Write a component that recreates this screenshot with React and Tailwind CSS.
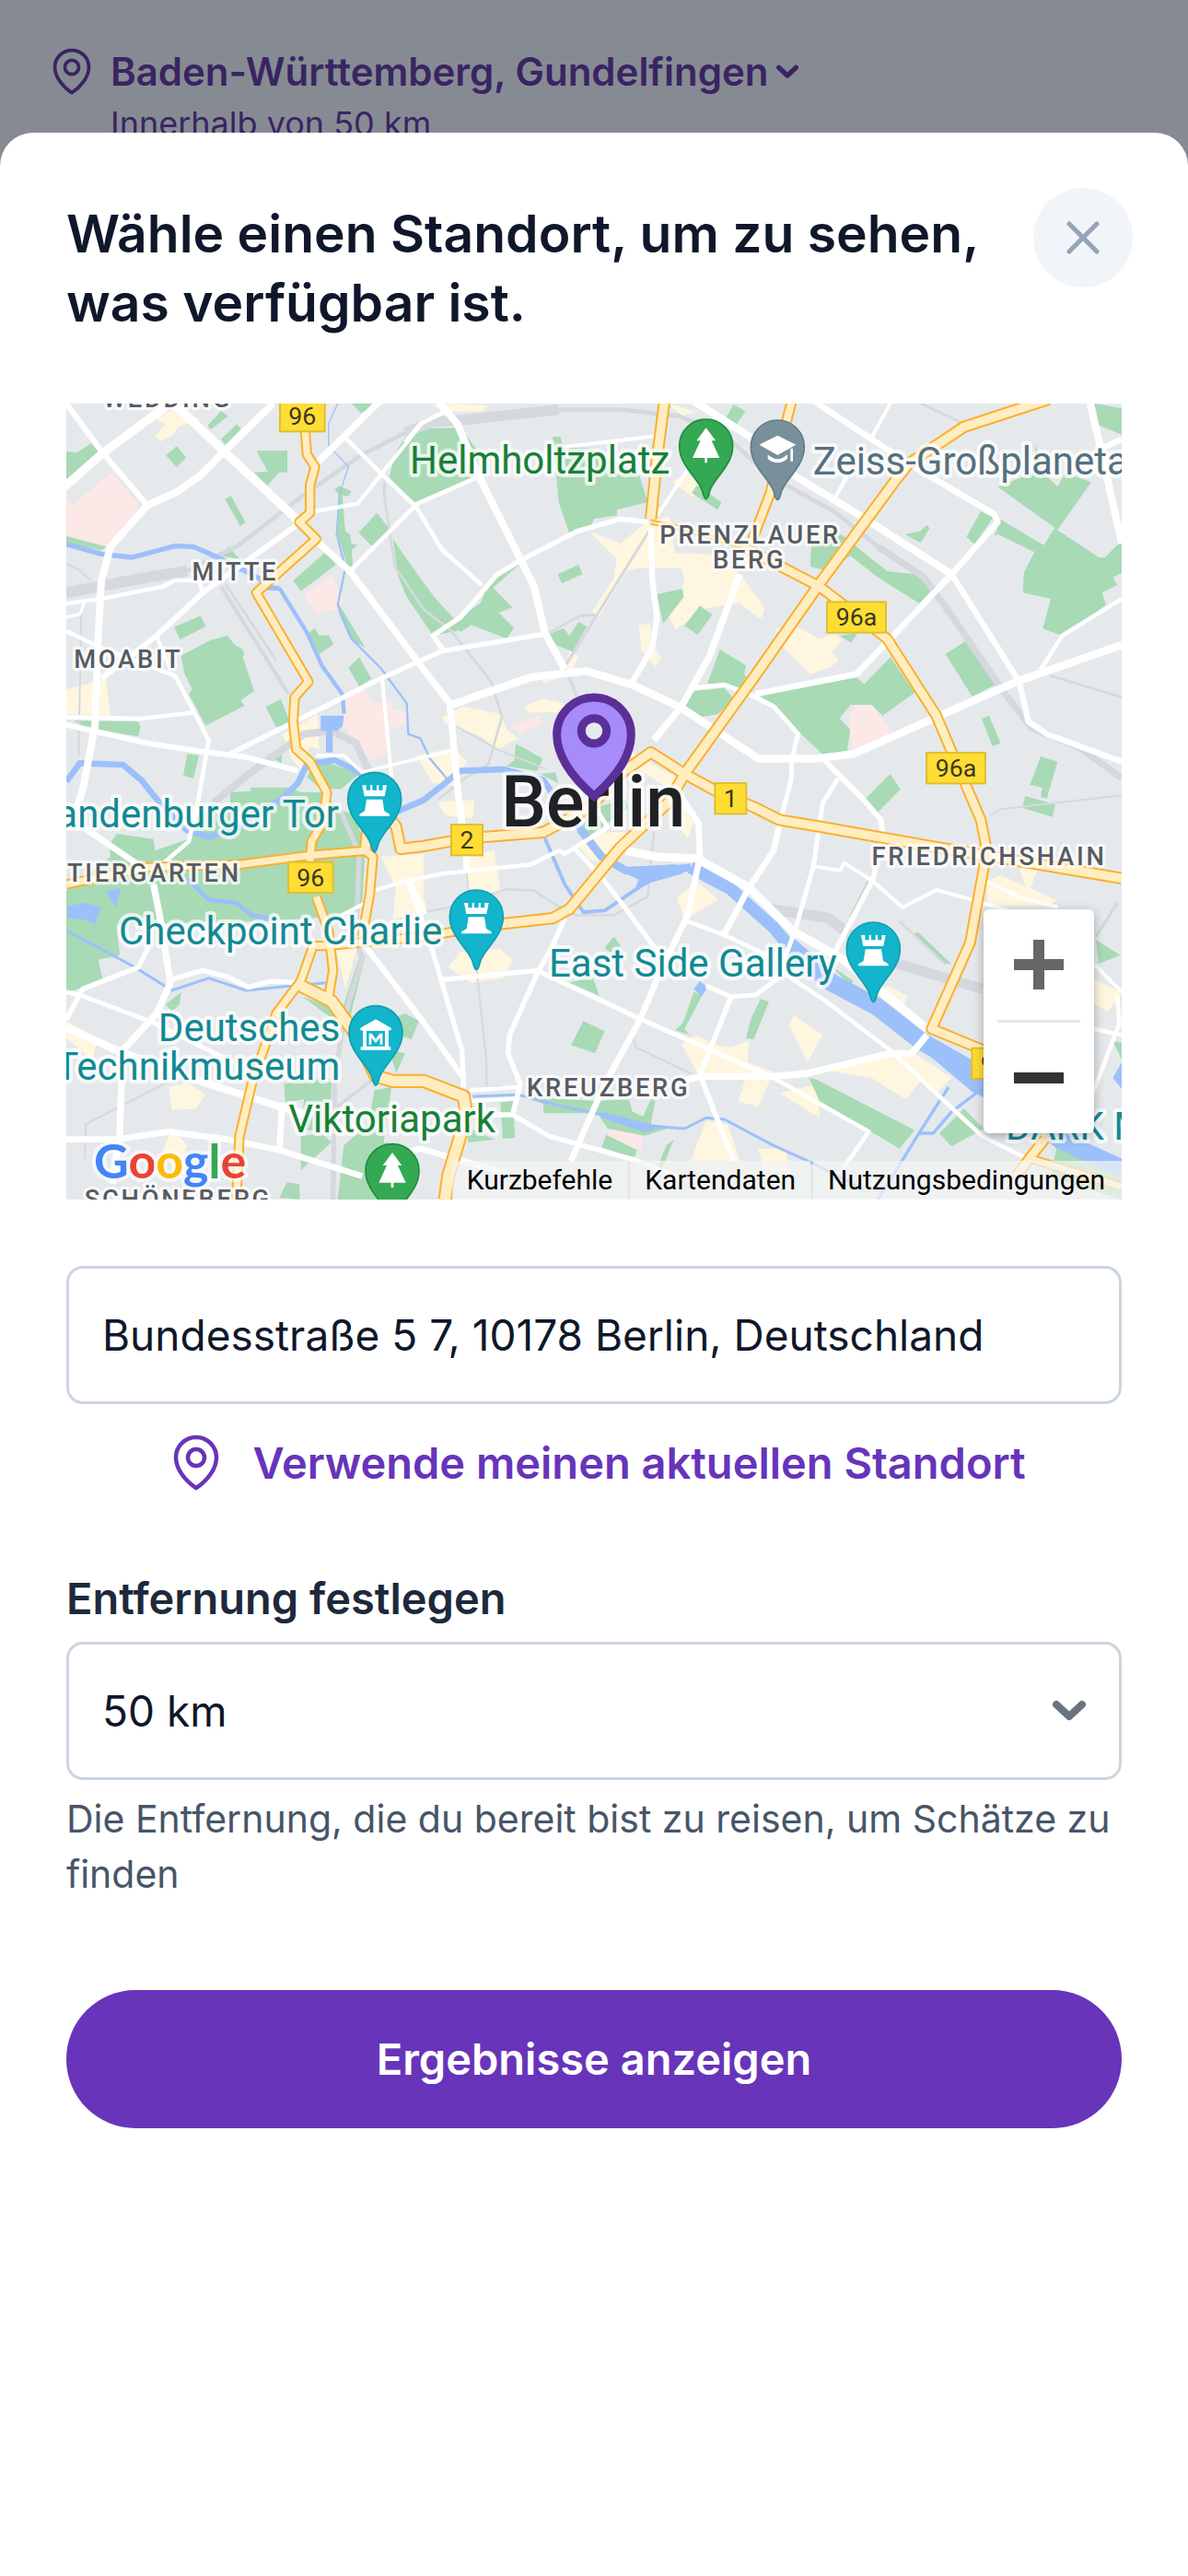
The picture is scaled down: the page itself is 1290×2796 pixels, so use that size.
import React, { useState } from "react";

const GREENS = [
  "0,156 35,160 80,130 115,165 0,246",
  "461,71 504,24 527,41 470,85",
  "504,116 554,68 570,81 519,136",
  "324,169 359,139 391,176 359,207",
  "619,154 720,154 720,224 694,224 654,268 612,224 656,221",
  "517,311 537,301 584,388 567,400",
  "929,0 1019,0 959,31",
  "1052,240 1074,156 1104,110 1180,81 1284,79 1334,146 1349,236 1144,326 1104,296",
  "889,268 929,286 919,301 899,301 909,416 924,426 929,456 949,461 929,476 934,526 919,546 894,456 879,426 889,296 874,281",
  "1012,356 1052,408 997,466 952,421",
  "739,576 844,484 879,524 764,611",
  "1064,441 1104,500 1199,631 1262,700 1274,740 1194,755 1108,628 1080,560",
  "499,496 529,466 564,506",
  "0,431 129,466 114,478 0,455",
  "351,728 437,691 454,726 371,768",
  "374,821 469,771 524,756 550,786 575,800 580,820 574,822 612,936 569,966 580,984 454,1049 399,946 410,930 384,876",
  "649,988 699,963 730,1041 684,1054",
  "784,751 809,731 824,756 854,754 871,784 824,816",
  "919,861 954,826 994,896 954,921",
  "884,646 974,796 924,766 889,686",
  "24,1033 234,1036 242,1054 234,1084 64,1056",
  "394,1141 432,1146 414,1221 381,1211",
  "654,1146 701,1134 702,1171",
  "784,1216 814,1156 954,1206 894,1256 824,1251",
  "0,1586 144,1476 139,1436 164,1401 284,1418 289,1456 404,1416 434,1326 534,1316 534,1266 600,1262 600,1250 724,1250 764,1266 834,1266 894,1326 939,1336 974,1446 964,1626 924,1666 664,1686 164,1696 174,1796 104,1811 119,1876 0,1921",
  "324,1956 374,1916 369,1956 344,1981",
  "954,1806 974,1796 924,2000 890,2000",
  "769,1931 864,1966 884,2016",
  "1079,1996 1104,1986 1149,2011 1124,2071 1094,2060",
  "1054,2106 1104,2116 1074,2181",
  "709,2216 794,2196 864,2211 859,2326 834,2366 764,2366 774,2266 714,2276",
  "1004,2236 1059,2226 1034,2406 1094,2416 1024,2592 884,2592 904,2416 984,2346",
  "764,2386 834,2376 864,2406 764,2496",
  "694,2586 719,2536 759,2541 761,2592",
  "1584,108 1609,108 1619,141 1704,146 1864,226 1894,321 1794,346 1794,364 1719,376 1704,406 1639,423 1604,321",
  "2174,3 2212,24 2179,76 2142,56",
  "2054,266 2134,321 2122,346 2037,291",
  "1601,556 1669,524 1681,556 1614,586",
  "1374,586 1479,521 1390,600 1454,664 1409,681 1459,731 1434,766 1319,721 1284,744 1254,716 1349,650",
  "1574,751 1619,731 1639,756 1669,711 1696,726 1649,808 1594,786",
  "1924,621 2007,603 2011,631 1944,716",
  "2064,658 2104,688 2057,753 2014,724",
  "2129,801 2214,853 2209,881 2219,896 2189,936 2089,911",
  "2044,936 2144,926 2174,961 2124,1011 2069,1021 2014,986",
  "1464,1108 1552,1156 1534,1196 1434,1181 1459,1161",
  "1544,1206 1594,1201 1602,1236",
  "3349,0 3438,16 3438,101 3364,71",
  "3034,271 3149,226 3159,131 3174,216 3229,271 3254,226 3339,256 3229,411",
  "3219,406 3364,501 3384,501 3438,446 3438,551 3409,566 3424,591 3374,616 3387,656 3244,756 3181,733 3207,636 3116,616 3119,551 3154,484 3034,425 3022,434 3044,378 3184,461",
  "2979,351 3019,371 2959,458 2932,434",
  "2731,426 2779,416 2804,396 2812,406 2784,454",
  "2424,501 2429,456 2524,426 2674,546 2764,556 2829,596 2779,651 2644,566 2554,496 2484,546 2424,531",
  "2520,756 2579,746 2556,779",
  "2254,948 2574,891 2599,914 2684,826 2764,941 2659,1016 2624,981 2554,981 2519,1026 2554,1061 2544,1131 2464,1143 2394,1076 2304,986",
  "2864,816 2934,771 3027,916 2951,954",
  "2982,1026 3006,1016 3044,1106 3017,1116",
  "3174,1149 3229,1166 3194,1286 3174,1281 3179,1251 3139,1241",
  "2684,1206 2717,1256 2640,1335 2600,1290",
  "3114,1316 3124,1278 3222,1306 3212,1346",
  "2609,1556 2622,1561 2566,1678 2551,1671",
  "2759,1726 2774,1721 2884,1826 2854,1821",
  "3354,1746 3434,1796 3364,1824",
  "2484,1826 2564,1880 2554,1894",
  "2419,2196 2444,2201 2764,2366 2714,2426 2454,2271",
  "2844,2376 2924,2296 2989,2361 2884,2419",
  "3229,2411 3438,2466 3438,2592 3204,2520",
  "2262,1938 2289,1948 2239,2071 2214,2066 2229,2006",
  "3409,2076 3438,2081 3438,2136",
  "1754,1771 1784,1736 1806,1766 1789,1806",
  "1639,1886 1714,1866 1736,1928",
  "1684,2011 1754,2044 1722,2116 1644,2089",
  "2044,1916 2072,1926 2014,2036 2029,2056 1984,2041 2009,2016",
  "1484,2256 1724,2271 1834,2266 1844,2306 1879,2321 1904,2266 1919,2271 1904,2346 1974,2356 1884,2384 1764,2361 1729,2311 1554,2311 1554,2281",
  "1759,2381 1859,2431 1849,2459 1744,2421",
  "1979,2396 1939,2496 1924,2491 1955,2415",
  "1414,2276 1454,2271 1462,2391 1422,2394",
  "1304,2356 1394,2396 1309,2406",
  "1319,2231 1414,2221 1444,2231",
  "1679,1376 1724,1316 1824,1286 1829,1321 1704,1406",
];

const PINKS = [
  "0,306 24,328 149,224 229,321 232,351 159,436 134,466 44,446 0,430",
  "774,626 864,556 904,636 889,666 819,689",
  "909,961 969,931 999,971 1059,976 1064,996 1109,1001 1109,1046 1039,1061 1044,1141 984,1164 899,1046",
  "1449,1051 1544,1014 1552,1041 1479,1074",
  "2554,1006 2574,979 2624,979 2694,1076 2564,1131 2549,1066",
  "1764,2376 1794,2356 1879,2381 1874,2431 1784,2411",
];

const CREAMS = [
  "289,106 324,66 274,46 364,16 434,51 365,75 350,100 309,124",
  "0,931 129,896 144,1016 0,1011",
  "734,1156 704,1076 819,1011 824,1126 794,1116 764,1191",
  "1189,6 1254,0 1374,6 1354,26 1254,26",
  "1959,0 2054,26 2009,41",
  "1974,256 2024,226 2064,266 2044,306",
  "1704,416 1804,456 1884,391 1964,366 1984,486 2104,491 2204,566 2274,666 2259,701 2194,651 2084,666 1984,736 1964,696 2014,576 2004,536 1864,536 1824,546 1734,696 1714,676 1784,566 1794,506",
  "1864,721 1904,716 1904,786 1939,826 1919,856 1874,806",
  "1489,986 1554,961 1619,976 1624,1006 1504,1006",
  "1224,1021 1294,986 1414,1011 1434,1061 1474,1091 1404,1126 1354,1086 1234,1041",
  "1139,1146 1264,1121 1304,1166 1264,1246 1194,1236",
  "1549,886 1624,866 1639,806 1669,826 1644,876 1554,911",
  "1824,1126 2004,1226 1964,1256 1844,1176",
  "2309,731 2394,731 2449,766 2504,751 2529,771 2494,806 2516,836 2494,856 2424,881 2334,791",
  "2244,636 2274,671 2264,701",
  "1024,1476 1164,1466 1164,1666 1064,1676 1074,1576",
  "879,1776 949,1766 909,1906",
  "0,2011 104,2066 84,2136 0,2066",
  "334,2226 394,2211 454,2251 424,2296 344,2301",
  "314,2436 344,2356 394,2416 364,2516",
  "1209,1296 1329,1291 1324,1351 1234,1341",
  "1289,1471 1394,1456 1414,1586 1314,1606",
  "1244,1836 1284,1786 1414,1776 1454,1811 1424,1871 1319,1886",
  "1104,1486 1174,1636 1154,1706 1104,1666",
  "1664,1436 1744,1396 1824,1396 1764,1496 1704,1486",
  "1989,1611 2054,1556 2124,1616 2074,1646 2014,1681",
  "1984,1366 2004,1296 2044,1366 2024,1416",
  "2004,2086 2054,2056 2104,2086 2164,2096 2224,2076 2219,2146 2304,2176 2254,2291 2189,2271 2214,2196 2064,2196",
  "2034,2466 2084,2336 2154,2346 2194,2466",
  "2354,2026 2369,1991 2464,2056 2414,2146",
  "2444,2166 2764,2116 2884,2196 2834,2246 2784,2206 2734,2266 2624,2196",
  "2324,2246 2444,2216 2454,2326",
  "2654,1936 2674,1894 2742,1931 2714,1981",
  "2994,1556 3044,1536 3224,1616 3204,1636 3004,1636",
  "3104,1516 3164,1516 3134,1596",
  "3349,1876 3438,1916 3394,1981 3349,1956",
  "2254,2426 2344,2426 2354,2500 2274,2500",
];

const PONDS = [
  "829,1016 904,1016 900,1050 884,1066 829,1066",
  "4,1636 64,1626 114,1641 94,1696 60,1680 4,1676",
  "129,1590 179,1576 160,1640",
  "2044,1906 2064,1881 2089,1901 2069,1931",
  "3409,2196 3438,2146 3438,2231",
  "2784,2060 2884,2110 2990,2160 2990,2260 2950,2240 2784,2100",
  "1744,1460 1824,1510 1984,1500 2010,1530 1904,1560 1850,1590 1864,1550 1780,1510",
  "1739,2306 1904,2346 1919,2366 1884,2372 1744,2326",
];

// [points, stroke width]
const RAILS = [
  ["0,616 264,566 394,545", 36],
  ["394,545 560,462 784,290 964,166 1104,95", 14],
  ["1104,95 1190,60 1304,52 1604,20", 34],
  ["1604,20 1804,20 1994,40 2144,100 2240,190 2344,266 2500,350 2644,466", 14],
  ["2644,466 2794,566 2884,690 3054,940 3144,1056 3300,1120 3438,1220", 22],
  ["504,596 724,946", 12],
  ["520,590 684,836", 8],
  ["49,666 40,1150", 6],
  ["0,520 40,540 80,576", 6],
  ["1036,256 1036,300 1070,530 1164,670 1254,740 1384,906 1419,1021 1374,1176 1304,1216 1210,1290", 8],
  ["1904,406 1724,696 1624,856 1664,956", 9],
  ["1564,751 1674,691 1724,688", 8],
  ["480,1300 590,1210 664,1156 774,1076 864,1066 944,1106 1004,1236", 24],
  ["894,1326 954,1466 944,1746 964,1806 904,2006 874,2200 869,2592", 16],
  ["870,2300 1000,2200", 10],
  ["1304,1526 1339,1866 1369,2146 1369,2226", 6],
  ["1164,1656 1274,1636 1434,1581 1524,1586 1624,1651 1664,1666 1784,1666 1894,1606 1914,1396", 7],
  ["1270,1050 1404,1126 1560,1190", 6],
  ["2294,1646 2484,1676 2574,1746 2714,1826 2984,1906", 34],
  ["2714,1686 2864,1826", 8],
  ["1849,2066 1854,2096 2044,2186", 6],
  ["60,2460 64,2346 330,2210", 6],
  ["3009,1341 3044,1321 3438,1276", 6],
  ["2784,0 2914,61", 8],
  ["3204,886 3438,956", 8],
  ["3354,1736 3424,1626", 10],
];

const WATERS = [
  ["0,458 114,490 214,501 354,464 414,466 494,501 584,546 630,570 650,600 694,601", 16],
  ["694,601 784,746 834,856 899,946 905,1010", 13],
  ["857,1066 857,1136", 22],
  ["884,436 909,536 884,656 929,766 1024,861 1109,976 1114,1076 1154,1091 1184,1156 1244,1226", 7],
  ["884,0 854,66 854,136 919,206 889,296 879,436", 4],
  ["0,1231 44,1171 184,1176 244,1226 304,1300 394,1390 464,1411 564,1380 600,1350 704,1286 754,1236 784,1176 874,1161 954,1201 1020,1280 1084,1326 1164,1291 1234,1236 1284,1196 1424,1191 1554,1226 1604,1300 1674,1386", 20],
  ["1674,1386 1744,1476 1824,1521 1984,1516 2034,1511", 26],
  ["2034,1511 2164,1581 2304,1706 2354,1766", 40],
  ["2354,1766 2494,1886 2644,1966 2784,2076 2984,2190 3240,2400 3438,2490", 58],
  ["1559,1416 1624,1566 1684,1656 1754,1651 1864,1576 1904,1531", 12],
  ["0,1716 94,1766 224,1836 344,1911 464,1871 584,1911 734,1896 844,1886", 9],
  ["1324,2256 1474,2251 1604,2286 1744,2316 1884,2351 2014,2361 2084,2326 2144,2331 2304,2416 2424,2470 2600,2560", 9],
  ["394,1546 464,1616 554,1626 604,1666 664,1676", 14],
  ["2874,2226 2784,2366 2644,2592", 10],
  ["2964,2246 2884,2306 2824,2376 2774,2376", 10],
];

const STREETS = [
  ["-10,275 119,161 309,21 345,-10", 28],
  ["340,-10 514,156 754,380", 28],
  ["814,446 924,546 1164,866 1249,976", 22],
  ["1249,976 1279,1296 1304,1466 1304,1526", 22],
  ["0,0 119,161 264,331", 18],
  ["674,0 514,156 434,236 364,286 264,331 144,466 114,576 104,756 96,976 94,1046 54,1256 34,1320", 24],
  ["44,1371 254,1516", 20],
  ["1024,-10 819,191", 22],
  ["1164,56 1094,146 949,326 809,351", 13],
  ["904,106 1024,226 1139,336 1224,476 1354,591", 14],
  ["1349,236 1144,326 1054,416 924,546", 14],
  ["764,386 444,616 294,756 114,896", 18],
  ["0,651 114,636 314,596 354,576 434,576 444,616", 14],
  ["0,696 44,686 59,651", 10],
  ["0,741 114,796 274,856 354,886 464,1096 429,1296 399,1426 294,1516", 14],
  ["294,756 340,870", 12],
  ["0,1021 244,1026 414,1006", 14],
  ["0,1046 264,1106 464,1136 584,1151 754,1196", 18],
  ["534,1141 724,1046 1024,896 1224,806 1554,751", 16],
  ["1029,896 1059,1216", 12],
  ["814,1146 904,1146 964,1201 1104,1166 1254,1131", 11],
  ["1214,-4 1274,66 1344,236 1479,506 1524,596 1559,746 1624,866", 24],
  ["1104,126 1154,66 1234,26", 14],
  ["1624,141 1924,106", 12],
  ["1230,806 1194,756 1284,696 1404,556 1479,511 1664,416 1804,376 1894,386", 16],
  ["1254,981 1514,891 1694,871 1844,916 2004,991 2254,1156 2444,1156 2564,1141 2824,1026 3094,906 3438,786", 25],
  ["1904,406 1909,576 1924,696 1909,796 1844,906", 19],
  ["2194,556 2094,826 2004,986 1914,1096", 22],
  ["2044,926 2144,916 2224,946 2304,986 2384,1076 2364,1156 2361,1226 2329,1346", 15],
  ["2244,946 2574,881 2694,756 2884,556 3034,386 3024,361 2744,196 2624,116 2424,-15", 20],
  ["2044,-8 2224,106 2374,236 2604,376 2884,556", 24],
  ["2684,0 2624,110", 12],
  ["2544,236 2504,306", 12],
  ["2024,216 1924,366", 12],
  ["2884,556 3104,906 3134,1036 3194,1076 3438,1166", 19],
  ["3174,866 3244,756 3438,636", 14],
  ["3334,-6 3374,166 3438,456", 24],
  ["3374,146 3438,116", 20],
  ["2464,1156 2594,1286 2654,1356 2659,1400 2629,1546 2504,1786", 17],
  ["2514,1221 2464,1300 2449,1400 2434,1506 2374,1716 2314,1876 2244,1926 2164,1931 2084,1896", 15],
  ["2434,1506 2519,1521 2534,1496 2629,1556 2724,1641 2834,1584 2950,1616 3064,1650", 12],
  ["3000,1556 3100,1606 3230,1640", 12],
  ["2329,1346 2304,1456 2224,1576 2144,1726", 20],
  ["1824,1456 1924,1476 2054,1481 2224,1576 2304,1656 2364,1716 2524,1806 2804,2036", 27],
  ["1994,1266 2059,1366 2064,1476 2024,1666 1924,1876 1869,2006 1754,2216 1644,2466", 20],
  ["1654,1446 1754,1556 1824,1646 1904,1756 1940,1790", 15],
  ["1104,1556 1224,1531 1514,1501 1604,1456 1624,1466 1764,1380 1720,1310", 14],
  ["1114,1556 1194,1786 1289,2106 1294,2226", 16],
  ["1224,1876 1534,1846 1874,2006 2304,2196", 16],
  ["1624,1676 1584,1766 1534,1856 1444,2056 1439,2116 1479,2216 1454,2316", 17],
  ["2024,1686 2144,1731 2304,1806 2354,1866 2474,1946 2684,2106 2844,2256 2984,2386 3144,2466", 14],
  ["2164,1936 2064,2186 2174,2466", 17],
  ["2004,2206 2064,2191 2304,2191 2414,2181 2684,2116 2754,2116 2804,2056", 22],
  ["2304,2196 2614,2371 2534,2486", 14],
  ["1314,2236 1474,2226", 14],
  ["1314,2272 1474,2262", 12],
  ["1394,2316 1454,2316 1574,2386 1844,2461 2000,2520", 16],
  ["974,1766 1164,2016 1294,2196", 19],
  ["284,1566 304,1666 339,1886 294,1986 184,2106 174,2376 150,2540", 22],
  ["270,1766 234,1836 54,1906 0,2006", 16],
  ["0,1916 44,1926 284,2016 544,2146", 15],
  ["0,2031 164,2106 464,2216 684,2286 800,2320", 24],
  ["339,1876 444,1846 524,1866 594,1901 664,1881 754,1886", 16],
  ["0,2396 164,2396 334,2371 524,2396 694,2431 964,2516", 20],
  ["704,2276 694,2431", 20],
  ["1004,1586 1120,1550 1170,1660", 12],
  ["974,1626 870,1680", 12],
  ["1100,2440 1154,2426 1440,2510", 20],
  ["3349,1826 3438,1916", 12],
  ["3349,2036 3438,2056", 14],
  ["3424,1930 3430,2020 3344,2246", 14],
];

const HIGHWAYS = [
  ["776,60 784,166 810,206 794,266 794,356 759,386 814,441 619,616 789,906 744,956 739,1036 749,1126 794,1166 849,1266 834,1366 799,1426 794,1500", 34],
  ["814,1606 854,1716 869,1846 854,1936", 34],
  ["0,1566 264,1510 564,1501 794,1471 974,1456 999,1476 989,1596 964,1736", 34],
  ["974,1456 980,1390 1060,1360 1074,1376 1089,1450 1164,1441 1304,1416 1554,1396 1704,1316 1804,1206 1904,1136 2014,1206 2124,1266 2244,1316 2324,1356 2444,1376 2844,1446 3438,1546", 40],
  ["2364,-10 2330,120 2294,290 2234,446", 36],
  ["1949,-10 1924,180 1904,376", 40],
  ["1904,386 2004,406 2204,466", 18],
  ["2204,466 2454,596 2674,766 2834,1016 2979,1356 2999,1456 2944,1756 2819,2036 2989,2106 3060,2140", 38],
  ["3200,-14 2924,76 2744,196 2704,246 2454,586 2244,886 2014,1206 1964,1296 1804,1446 1639,1646 1584,1676 1404,1696", 40],
  ["1404,1696 1164,1736 844,1766 804,1766 764,1880 684,1986 604,2216 564,2386 554,2592", 34],
  ["764,1896 864,1946 944,2056 1008,2190 1064,2206 1164,2206 1294,2256 1304,2316 1244,2516 1234,2592", 46],
  ["3194,2386 3144,2450 3094,2516", 38],
  ["3144,2460 3438,2550", 32],
];

const SHIELDS = [
  { x: 693, y: -12, w: 152, label: "96" },
  { x: 720, y: 1490, w: 152, label: "96" },
  { x: 1251, y: 1368, w: 108, label: "2" },
  { x: 2110, y: 1233, w: 108, label: "1" },
  { x: 2475, y: 643, w: 198, label: "96a" },
  { x: 2799, y: 1134, w: 198, label: "96a" },
  { x: 2947, y: 2096, w: 198, label: "96a" },
];

const DISTRICTS = [
  { x: 330, y: 12, label: "WEDDING" },
  { x: 550, y: 576, label: "MITTE" },
  { x: 202, y: 861, label: "MOABIT" },
  { x: 2228, y: 455, label: "PRENZLAUER" },
  { x: 2225, y: 537, label: "BERG" },
  { x: 286, y: 1558, label: "TIERGARTEN" },
  { x: 3006, y: 1504, label: "FRIEDRICHSHAIN" },
  { x: 1766, y: 2256, label: "KREUZBERG" },
  { x: 364, y: 2620, label: "SCHÖNEBERG" },
];

const TEAL = "#128a93";
const PLACES = [
  { x: 1966, y: 228, anchor: "end", fill: "#188038", label: "Helmholtzplatz" },
  { x: 2432, y: 232, anchor: "start", fill: "#56707f", label: "Zeiss-Großplanetarium" },
  { x: 888, y: 1379, anchor: "end", fill: TEAL, label: "Brandenburger Tor" },
  { x: 1225, y: 1762, anchor: "end", fill: TEAL, label: "Checkpoint Charlie" },
  { x: 2510, y: 1866, anchor: "end", fill: TEAL, label: "East Side Gallery" },
  { x: 892, y: 2076, anchor: "end", fill: TEAL, label: "Deutsches" },
  { x: 892, y: 2203, anchor: "end", fill: TEAL, label: "Technikmuseum" },
  { x: 1398, y: 2373, anchor: "end", fill: "#188038", label: "Viktoriapark" },
  { x: 3060, y: 2397, anchor: "start", fill: TEAL, label: "DARK MATTER" },
];

const GLYPHS = {
  tree: "M0-232 31-190H18L44-134H4V-118H-4V-134H-44L-18-190H-31Z",
  rook: "M-40-218H-27V-202H-14V-218H-7V-202H7V-218H14V-202H27V-218H40L33-182H-33ZM-26-172H26L32-134 49-124V-118H-49V-124L-32-134Z",
  school: "M0-210 60-180 0-146-60-180ZM-32-148Q0-118 32-148V-134Q0-108-32-134ZM42-168H50V-126H42Z",
  museum: "M0-216 50-188V-180H42V-126H49V-116H-49V-126H-42V-180H-50V-188ZM-30-178V-128H30V-178ZM-22-134V-170H-13L0-152 13-170H22V-134H14V-156L0-138-14-156V-134Z",
};

const PINS = [
  { x: 2084, y: 311, fill: "#34a853", stroke: "#1e8e3e", glyph: "tree" },
  { x: 2317, y: 314, fill: "#78909c", stroke: "#607d8b", glyph: "school" },
  { x: 1004, y: 1461, fill: "#12b5cb", stroke: "#129eaf", glyph: "rook" },
  { x: 1336, y: 1844, fill: "#12b5cb", stroke: "#129eaf", glyph: "rook" },
  { x: 2629, y: 1949, fill: "#12b5cb", stroke: "#129eaf", glyph: "rook" },
  { x: 1008, y: 2221, fill: "#12b5cb", stroke: "#129eaf", glyph: "museum" },
  { x: 1062, y: 2671, fill: "#34a853", stroke: "#1e8e3e", glyph: "tree" },
];

const Areas = ({ shapes, fill }) => (
  <g fill={fill}>
    {shapes.map((points) => (
      <polygon key={points} points={points} />
    ))}
  </g>
);

const Lines = ({ lines, color, inset = 0 }) => (
  <g fill="none" stroke={color} strokeLinejoin="round">
    {lines.map(([points, width]) => (
      <polyline key={points} points={points} strokeWidth={width - inset} />
    ))}
  </g>
);

const BerlinMap = () => (
  <svg
    viewBox="0 0 3438 2592"
    preserveAspectRatio="xMidYMid slice"
    className="h-full w-full font-[Roboto,sans-serif]"
    role="img"
    aria-label="Karte von Berlin"
  >
    <rect width="3438" height="2592" fill="#e5e9ec" />
    <Areas shapes={CREAMS} fill="#fef6de" />
    <Areas shapes={PINKS} fill="#fce8e6" />
    <Areas shapes={GREENS} fill="#a8dab5" />
    <Lines lines={RAILS} color="#d5d9dd" />
    <Lines lines={WATERS} color="#9cc0fa" />
    <Areas shapes={PONDS} fill="#9cc0fa" />
    <Lines lines={STREETS} color="#ffffff" />
    <Lines lines={HIGHWAYS} color="#fbb02d" />
    <Lines lines={HIGHWAYS} color="#ffedc2" inset={12} />

    {SHIELDS.map((s) => (
      <g key={`${s.x}-${s.y}`}>
        <rect x={s.x + 3} y={s.y + 3} width={s.w - 6} height="100" fill="#ffdd35" stroke="#dfbf30" strokeWidth="6" />
        <text x={s.x + s.w / 2} y={s.y + 81} textAnchor="middle" fontSize="80" fill="#3b3820">
          {s.label}
        </text>
      </g>
    ))}

    <g
      fill="#575b61"
      stroke="#ffffff"
      strokeOpacity="0.75"
      strokeWidth="20"
      strokeLinejoin="round"
      paintOrder="stroke"
      textAnchor="middle"
      fontSize="82"
      className="font-medium tracking-widest"
    >
      {DISTRICTS.map((d) => (
        <text key={d.label} x={d.x} y={d.y}>
          {d.label}
        </text>
      ))}
    </g>

    <g stroke="#ffffff" strokeOpacity="0.75" strokeWidth="24" strokeLinejoin="round" paintOrder="stroke" fontSize="126">
      {PLACES.map((p) => (
        <text key={p.label} x={p.x} y={p.y} textAnchor={p.anchor} fill={p.fill}>
          {p.label}
        </text>
      ))}
      <text x="1717" y="1376" textAnchor="middle" fontSize="232" fill="#202124" className="font-medium">
        Berlin
      </text>
    </g>

    {PINS.map((p) => (
      <g key={`${p.x}-${p.y}`} transform={`translate(${p.x} ${p.y})`}>
        <path
          d="M0 0C-6-2-9-12-12-26C-26-70-87-108-87-173A87 87 0 0 1 87-173C87-108 26-70 12-26C9-12 6-2 0 0Z"
          fill={p.fill}
          stroke={p.stroke}
          strokeWidth="5"
        />
        <path d={GLYPHS[p.glyph]} fill="#ffffff" fillRule="evenodd" />
      </g>
    ))}

    {/* chosen location */}
    <path
      d="M1719 1279C1642 1212 1598 1146 1598 1078A121 121 0 0 1 1840 1078C1840 1146 1796 1212 1719 1279ZM1760 1066A41 41 0 1 0 1678 1066A41 41 0 1 0 1760 1066Z"
      fill="#a78bfa"
      fillRule="evenodd"
      stroke="#5b2f98"
      strokeWidth="27"
    />
  </svg>
);

const PinIcon = ({ className }) => (
  <svg viewBox="0 0 50 62" fill="none" stroke="currentColor" strokeWidth="4.5" className={className} aria-hidden="true">
    <path d="M25 58C14 51 3 38 3 25A22 22 0 0 1 47 25C47 38 36 51 25 58Z" strokeLinejoin="round" />
    <circle cx="25" cy="25" r="9" />
  </svg>
);

const Chevron = ({ className }) => (
  <svg
    viewBox="0 0 38 24"
    fill="none"
    stroke="currentColor"
    strokeWidth="8"
    strokeLinecap="round"
    strokeLinejoin="round"
    className={className}
    aria-hidden="true"
  >
    <path d="M5 5 19 18 33 5" />
  </svg>
);

const LocationHeader = () => (
  <header className="h-[180px] overflow-hidden bg-[#868b93] px-14 pt-12 text-[#3a2462]">
    <div className="flex gap-5">
      <PinIcon className="mt-1 h-[52px] w-[44px] shrink-0" />
      <div>
        <button type="button" className="flex items-center gap-2 text-[42px] leading-[60px] font-semibold">
          Baden-Württemberg, Gundelfingen
          <Chevron className="h-4 w-[26px]" />
        </button>
        <p className="text-[36px] leading-[52px]">Innerhalb von 50 km</p>
      </div>
    </div>
  </header>
);

const MapPanel = () => (
  <div className="relative h-[864px] overflow-hidden">
    <BerlinMap />
    <a
      href="#google"
      className="absolute bottom-2 left-[30px] font-[Lato,sans-serif] text-[52px] leading-[70px] font-bold [-webkit-text-stroke:8px_#fff9] [paint-order:stroke]"
    >
      <span className="text-[#4285f4]">G</span>
      <span className="text-[#ea4335]">o</span>
      <span className="text-[#fbbc05]">o</span>
      <span className="text-[#4285f4]">g</span>
      <span className="text-[#34a853]">l</span>
      <span className="text-[#ea4335]">e</span>
    </a>
    <div className="absolute right-0 bottom-0 flex gap-[3px] font-[Roboto,sans-serif] text-[30px] leading-[42px] text-black">
      <button type="button" className="bg-[#f5f5f5]/70 px-4">Kurzbefehle</button>
      <button type="button" className="bg-[#f5f5f5]/70 px-4">Kartendaten</button>
      <a href="#terms" className="bg-[#f5f5f5]/70 pr-[18px] pl-4">Nutzungsbedingungen</a>
    </div>
    <div className="absolute right-[30px] bottom-[72px] flex w-[120px] flex-col items-center rounded-md bg-white shadow-[0_3px_12px_rgba(0,0,0,0.3)]">
      <button type="button" aria-label="Vergrößern" className="flex h-[120px] w-full items-center justify-center">
        <svg viewBox="0 0 54 54" className="h-[54px] w-[54px]" fill="#666666">
          <path d="M21 0H33V21H54V33H33V54H21V33H0V21H21Z" />
        </svg>
      </button>
      <div className="h-[3px] w-[90px] bg-[#e6e6e6]" />
      <button type="button" aria-label="Verkleinern" className="flex h-[120px] w-full items-center justify-center">
        <svg viewBox="0 0 54 54" className="h-[54px] w-[54px]" fill="#333333">
          <path d="M0 21H54V33H0Z" />
        </svg>
      </button>
    </div>
  </div>
);

const App = () => {
  const [address, setAddress] = useState("Bundesstraße 5 7, 10178 Berlin, Deutschland");
  const [distance, setDistance] = useState("50");

  return (
    <div className="flex min-h-screen flex-col bg-[#868b93] font-[Inter,sans-serif]">
      <LocationHeader />

      <main className="relative -mt-9 flex-1 rounded-t-[36px] bg-white px-[72px] pt-[60px]">
        <div className="-mr-3 flex items-start justify-between">
          <h1 className="pt-3 text-[57px] leading-[75px] font-semibold text-[#0f172a]">
            Wähle einen Standort, um zu sehen, was verfügbar ist.
          </h1>
          <button
            type="button"
            aria-label="Schließen"
            className="flex h-[108px] w-[108px] shrink-0 items-center justify-center rounded-full bg-[#f1f5f9] text-[#94a3b8]"
          >
            <svg viewBox="0 0 36 36" className="h-9 w-9" fill="none" stroke="currentColor" strokeWidth="5" strokeLinecap="round">
              <path d="M3 3 33 33M33 3 3 33" />
            </svg>
          </button>
        </div>

        <div className="mt-[72px]">
          <MapPanel />
        </div>

        <input
          type="text"
          aria-label="Standort"
          value={address}
          onChange={(e) => setAddress(e.target.value)}
          className="mt-[72px] h-[150px] w-full rounded-[18px] border-3 border-[#cbd5e1] px-9 text-[46px] text-[#0f172a]"
        />

        <button
          type="button"
          className="mt-6 flex h-20 w-full items-center justify-center gap-9 pl-3 text-[47px] font-semibold text-[#6734ba]"
        >
          <PinIcon className="h-[62px] w-[50px] shrink-0" />
          Verwende meinen aktuellen Standort
        </button>

        <label htmlFor="distance" className="mt-[72px] block text-[47px] leading-[70px] font-semibold text-[#1e293b]">
          Entfernung festlegen
        </label>
        <div className="relative mt-3">
          <select
            id="distance"
            value={distance}
            onChange={(e) => setDistance(e.target.value)}
            className="h-[150px] w-full appearance-none rounded-[18px] border-3 border-[#cbd5e1] bg-white px-9 text-[46px] text-[#0f172a]"
          >
            <option value="10">10 km</option>
            <option value="25">25 km</option>
            <option value="50">50 km</option>
            <option value="100">100 km</option>
          </select>
          <Chevron className="pointer-events-none absolute top-[63px] right-[38px] h-6 w-[38px] text-[#6b7280]" />
        </div>
        <p className="mt-3 text-[41px] leading-[60px] text-[#475569]">
          Die Entfernung, die du bereit bist zu reisen, um Schätze zu finden
        </p>

        <button
          type="button"
          className="mt-24 h-[150px] w-full rounded-full bg-[#6734ba] text-[47px] font-semibold text-white"
        >
          Ergebnisse anzeigen
        </button>
      </main>
    </div>
  );
};

export default App;
